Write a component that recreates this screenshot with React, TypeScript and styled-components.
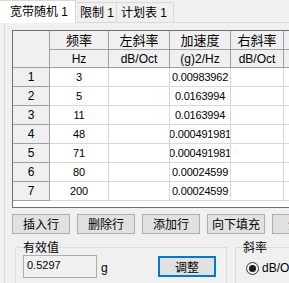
import React from "react";
import styled, { createGlobalStyle } from "styled-components";

const CJK = `"Noto Sans CJK SC", "Liberation Sans", sans-serif`;
const SANS = `"Liberation Sans", Arial, sans-serif`;
const MIXED = `"Liberation Sans", "Noto Sans CJK SC", sans-serif`;

const GlobalStyle = createGlobalStyle`
  html, body {
    margin: 0;
    padding: 0;
    background: #f0f0f0;
    overflow: hidden;
  }
  body {
    width: 289px;
    height: 283px;
    font-family: ${CJK};
    color: #000;
  }
`;

const Window = styled.div`
  width: 440px;
  height: 283px;
  display: flex;
  flex-direction: column;
`;

const TabBar = styled.div`
  display: flex;
  align-items: flex-end;
  height: 22px;
  position: relative;
  z-index: 2;
`;

const Tab = styled.div<{ $active?: boolean; $w: number }>`
  box-sizing: border-box;
  width: ${(p) => p.$w}px;
  height: ${(p) => (p.$active ? 23 : 20)}px;
  margin-bottom: ${(p) => (p.$active ? -1 : 0)}px;
  padding-left: ${(p) => (p.$active ? 10 : 4)}px;
  display: flex;
  align-items: center;
  background: ${(p) => (p.$active ? "#fff" : "#f0f0f0")};
  border-top: 1px solid #d9d9d9;
  border-right: 1px solid #d9d9d9;
  font-family: ${MIXED};
  font-size: 12px;
  line-height: 16px;
  white-space: nowrap;
`;

const Panel = styled.div`
  flex: 1;
  margin-left: 4px;
  border-top: 1px solid #d9d9d9;
  border-left: 1px solid #d9d9d9;
  padding: 7px 0 0 7px;
`;

const Sheet = styled.div`
  box-sizing: border-box;
  width: 400px;
  height: 178px;
  background: #fff;
  border: 1px solid #6e6e6e;
  display: grid;
  grid-template-columns: 37px 59px 61px 61px 53px 100px;
  grid-template-rows: 19px 18px repeat(7, 19px);
  align-content: start;
`;

const HeadCell = styled.div<{ $sub?: boolean; $span?: number }>`
  box-sizing: border-box;
  grid-row: span ${(p) => p.$span || 1};
  background: #f0f0f0;
  border-right: 1px solid #a0a0a0;
  border-bottom: 1px solid #a0a0a0;
  display: flex;
  align-items: center;
  justify-content: center;
  font-family: ${(p) => (p.$sub ? SANS : CJK)};
  font-size: ${(p) => (p.$sub ? 12 : 13)}px;
  line-height: 16px;
  white-space: nowrap;
  overflow: hidden;
`;

const RowHead = styled.div`
  box-sizing: border-box;
  background: #f0f0f0;
  border-right: 1px solid #a0a0a0;
  border-bottom: 1px solid #a0a0a0;
  display: flex;
  align-items: center;
  justify-content: center;
  font-family: ${SANS};
  font-size: 12px;
`;

const Cell = styled.div`
  box-sizing: border-box;
  border-right: 1px solid #d8d8d8;
  border-bottom: 1px solid #d8d8d8;
  display: flex;
  align-items: center;
  justify-content: center;
  font-family: ${SANS};
  font-size: 11px;
  letter-spacing: -0.2px;
  white-space: nowrap;
  overflow: hidden;
`;

const ButtonRow = styled.div`
  display: flex;
  gap: 7px;
  margin-top: 6px;
`;

const Button = styled.button<{ $focus?: boolean; $w?: number }>`
  box-sizing: border-box;
  flex: none;
  width: ${(p) => p.$w || 58}px;
  height: ${(p) => (p.$focus ? 21 : 20)}px;
  padding: 0;
  background: #e1e1e1;
  border: ${(p) => (p.$focus ? "2px solid #0078d7" : "1px solid #adadad")};
  font-family: ${CJK};
  font-size: 12px;
  line-height: 16px;
  color: #000;
`;

const GroupRow = styled.div`
  display: flex;
  gap: 8px;
  margin: 4px 0 0 3px;
`;

const Group = styled.fieldset<{ $w: number }>`
  box-sizing: border-box;
  width: ${(p) => p.$w}px;
  margin: 0;
  padding: 0 10px 10px 7px;
  border: 1px solid #dcdcdc;
  min-inline-size: 0;
`;

const Legend = styled.legend`
  padding: 0;
  font-size: 12px;
  line-height: 18px;
`;

const GroupBody = styled.div`
  display: flex;
  align-items: center;
  margin-top: -1px;
`;

const TextBox = styled.div`
  box-sizing: border-box;
  width: 74px;
  height: 23px;
  padding: 2px 3px;
  border: 1px solid #adadad;
  background: #f0f0f0;
  font-family: ${SANS};
  font-size: 11px;
  line-height: 14px;
`;

const Unit = styled.span`
  margin: 3px 0 0 4px;
  font-family: ${SANS};
  font-size: 12px;
`;

const Spacer = styled.div`
  flex: 1;
`;

const RadioLabel = styled.label`
  display: flex;
  align-items: center;
  gap: 3px;
  margin: 5px 0 0 3px;
  font-family: ${SANS};
  font-size: 12px;
  white-space: nowrap;
`;

const RadioDot = styled.span`
  box-sizing: border-box;
  width: 13px;
  height: 13px;
  border: 1px solid #333;
  border-radius: 50%;
  display: flex;
  align-items: center;
  justify-content: center;
  &::after {
    content: "";
    width: 7px;
    height: 7px;
    border-radius: 50%;
    background: #1a1a1a;
  }
`;

const rows = [
  ["3", "0.00983962"],
  ["5", "0.0163994"],
  ["11", "0.0163994"],
  ["48", "0.000491981"],
  ["71", "0.000491981"],
  ["80", "0.00024599"],
  ["200", "0.00024599"],
];

export default function App() {
  return (
    <Window>
      <GlobalStyle />
      <TabBar>
        <Tab $active $w={76}>宽带随机 1</Tab>
        <Tab $w={41}>限制 1</Tab>
        <Tab $w={57}>计划表 1</Tab>
      </TabBar>
      <Panel>
        <Sheet>
          <HeadCell $span={2} />
          <HeadCell>频率</HeadCell>
          <HeadCell>左斜率</HeadCell>
          <HeadCell>加速度</HeadCell>
          <HeadCell>右斜率</HeadCell>
          <HeadCell />
          <HeadCell $sub>Hz</HeadCell>
          <HeadCell $sub>dB/Oct</HeadCell>
          <HeadCell $sub>(g)2/Hz</HeadCell>
          <HeadCell $sub>dB/Oct</HeadCell>
          <HeadCell $sub />
          {rows.map(([f, a], i) => (
            <React.Fragment key={i}>
              <RowHead>{i + 1}</RowHead>
              <Cell>{f}</Cell>
              <Cell />
              <Cell>{a}</Cell>
              <Cell />
              <Cell />
            </React.Fragment>
          ))}
        </Sheet>
        <ButtonRow>
          <Button>插入行</Button>
          <Button>删除行</Button>
          <Button>添加行</Button>
          <Button>向下填充</Button>
          <Button $w={80}>全部清除</Button>
        </ButtonRow>
        <GroupRow>
          <Group $w={212}>
            <Legend>有效值</Legend>
            <GroupBody>
              <TextBox>0.5297</TextBox>
              <Unit>g</Unit>
              <Spacer />
              <Button $focus>调整</Button>
            </GroupBody>
          </Group>
          <Group $w={160}>
            <Legend>斜率</Legend>
            <RadioLabel>
              <RadioDot />
              dB/Oct
            </RadioLabel>
          </Group>
        </GroupRow>
      </Panel>
    </Window>
  );
}
